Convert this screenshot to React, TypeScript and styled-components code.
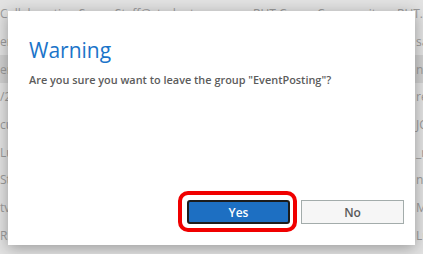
import styled, { createGlobalStyle } from "styled-components";

const GlobalStyle = createGlobalStyle`
  html, body {
    margin: 0;
    padding: 0;
    width: 423px;
    height: 254px;
    overflow: hidden;
    font-family: "Open Sans", "Noto Sans", sans-serif;
  }
`;

const Page = styled.div`
  position: relative;
  width: 423px;
  height: 254px;
  overflow: hidden;
  background: #e2e2e2;
`;

const List = styled.div`
  display: flex;
  flex-direction: column;
`;

const Row = styled.div<{ $active?: boolean }>`
  height: 27.7px;
  display: grid;
  grid-template-columns: 253px 64px 80px 26px;
  align-items: center;
  background: ${(p) => (p.$active ? "#d0d0d0" : "transparent")};
  color: #9b9b9b;
  font-size: 12px;
  white-space: nowrap;
  overflow: hidden;
`;

const Cell = styled.span<{ $pad?: number }>`
  overflow: hidden;
  padding-left: ${(p) => p.$pad ?? 0}px;
`;

const Dialog = styled.div`
  position: absolute;
  left: 8px;
  top: 11px;
  width: 407px;
  height: 234px;
  background: #ffffff;
  box-shadow: 0 3px 14px rgba(0, 0, 0, 0.32);
  box-sizing: border-box;
  padding: 24px 11px 21px 21px;
  display: flex;
  flex-direction: column;
`;

const Title = styled.h1`
  margin: 0;
  font-size: 21px;
  font-weight: 400;
  color: #1b74c9;
  line-height: 30px;
`;

const Message = styled.p`
  margin: 7px 0 0;
  font-size: 10.9px;
  font-weight: 600;
  color: #5c5c5c;
  line-height: 16px;
  flex: 1;
`;

const Actions = styled.div`
  display: flex;
  justify-content: flex-end;
  gap: 11px;
`;

const Button = styled.button<{ $primary?: boolean }>`
  position: relative;
  width: 103px;
  height: 24px;
  box-sizing: border-box;
  font-family: "Open Sans", "Noto Sans", sans-serif;
  font-size: 12px;
  font-weight: 600;
  border-radius: ${(p) => (p.$primary ? "3px" : "0")};
  border: ${(p) => (p.$primary ? "2px solid #1c1c1c" : "1px solid #a3acab")};
  background: ${(p) => (p.$primary ? "#1d6fc2" : "#f6f6f6")};
  color: ${(p) => (p.$primary ? "#ffffff" : "#5a5a5a")};
  padding: 0;
`;

const Highlight = styled.span`
  position: absolute;
  left: -11px;
  top: -11px;
  right: -9px;
  bottom: -10px;
  border: 4px solid #f00000;
  border-radius: 10px;
  pointer-events: none;
`;

const header = ["Collaboration Space Staff@student", "RUT C", "Communit", "RUT.C"];

const rows = [
  ["en", "sa"],
  ["en", "ne"],
  ["/2", "re"],
  ["cu", "JC"],
  ["Lu", "_n"],
  ["St", "nt"],
  ["tv", "M"],
  ["RS", "Lu"],
];

const App = () => {
  return (
    <Page>
      <GlobalStyle />
      <List>
        <Row>
          {header.map((c, j) => (
            <Cell key={j}>{c}</Cell>
          ))}
        </Row>
        {rows.map((r, i) => (
          <Row key={i} $active={i === 1}>
            <Cell>{r[0]}</Cell>
            <Cell />
            <Cell />
            <Cell $pad={19}>{r[1]}</Cell>
          </Row>
        ))}
      </List>
      <Dialog>
        <Title>Warning</Title>
        <Message>Are you sure you want to leave the group "EventPosting"?</Message>
        <Actions>
          <Button $primary>
            Yes
            <Highlight />
          </Button>
          <Button>No</Button>
        </Actions>
      </Dialog>
    </Page>
  );
};

export default App;
